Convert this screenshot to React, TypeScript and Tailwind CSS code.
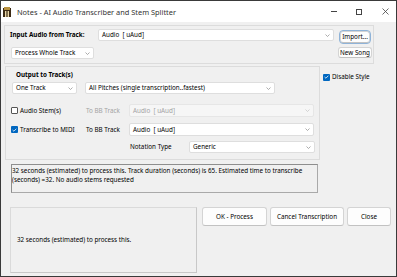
import React from 'react'

const Chevron = ({ muted }: { muted?: boolean }) => (
  <svg width="5" height="3" viewBox="0 0 5 3" className="shrink-0">
    <path d="M0.5 0.5 L2.5 2.5 L4.5 0.5" fill="none" stroke={muted ? '#c4c4c4' : '#8a8a8a'} strokeWidth="0.7" />
  </svg>
)

function Select({ text, className, disabled }: { text: string; className: string; disabled?: boolean }) {
  return (
    <div
      className={`flex items-center justify-between pl-[3px] pr-[3px] rounded-[2px] border ${
        disabled ? 'bg-[#f6f6f6] border-[#e6e6e6] text-[#a3a3a3]' : 'bg-white border-[#dedede] text-black'
      } ${className}`}>
      <span className="whitespace-pre">{text}</span>
      <Chevron muted={disabled} />
    </div>
  )
}

function Check({ checked, label }: { checked?: boolean; label: string }) {
  return (
    <div className="flex items-center gap-[2px]">
      {checked ? (
        <div className="w-[7px] h-[7px] rounded-[1px] bg-[#0067c0] flex items-center justify-center">
          <svg width="5" height="4" viewBox="0 0 5 4">
            <path d="M0.6 2 L1.9 3.2 L4.4 0.7" fill="none" stroke="white" strokeWidth="0.8" />
          </svg>
        </div>
      ) : (
        <div className="w-[7px] h-[7px] rounded-[1px] border border-[#555] bg-white" />
      )}
      <span className="whitespace-nowrap">{label}</span>
    </div>
  )
}

function Btn({ label, className }: { label: string; className: string }) {
  return (
    <div
      className={`flex items-center justify-center bg-[#fdfdfd] border border-[#d4d4d4] border-b-[#c2c2c2] rounded-[3px] whitespace-nowrap ${className}`}>
      {label}
    </div>
  )
}

export default function App() {
  return (
    <div className="w-[397px] h-[277px] border border-[#3a3a3a] bg-[#f0f0f0] flex flex-col overflow-hidden text-[6.3px] leading-[8px] text-black font-['Noto_Sans',sans-serif]">
      {/* title bar */}
      <div className="h-[21px] bg-white flex items-center shrink-0">
        <svg width="8" height="10" viewBox="0 0 8 10" className="ml-[2px]">
          <rect x="0" y="1" width="8" height="9" fill="#3b2a14" />
          <rect x="1" y="0" width="6" height="3" fill="#b8923f" />
          <rect x="2" y="4" width="1.4" height="6" fill="#e8d7a8" />
          <rect x="4.6" y="4" width="1.4" height="6" fill="#e8d7a8" />
        </svg>
        <span className="ml-[6px] text-[7.4px] text-[#333]">Notes - AI Audio Transcriber and Stem Splitter</span>
        <div className="ml-auto flex items-center">
          <div className="w-[6px] h-[1px] bg-[#444] mr-[19px]" />
          <div className="w-[6px] h-[6px] border border-[#444] mr-[20px]" />
          <svg width="7" height="7" viewBox="0 0 7 7" className="mr-[7px]">
            <path d="M0.5 0.5 L6.5 6.5 M6.5 0.5 L0.5 6.5" stroke="#444" strokeWidth="0.8" />
          </svg>
        </div>
      </div>

      {/* body */}
      <div className="flex-1 flex flex-col pl-[3px]">
        {/* input group */}
        <div className="mt-[3px] w-[370px] h-[39px] border border-[#dcdcdc] flex justify-between">
          <div className="flex flex-col pl-[5px] pt-[3px]">
            <div className="flex items-center h-[12px]">
              <span className="w-[88px] font-bold">Input Audio from Track:</span>
              <Select text="Audio  [ uAud]" className="w-[236px] h-[12px]" />
            </div>
            <Select text="Process Whole Track" className="mt-[6px] ml-[1px] w-[83px] h-[12px]" />
          </div>
          <div className="flex flex-col items-center pt-[5px] pr-[1px]">
            <Btn label="Import..." className="w-[30px] h-[12px] border-[#2d5f93] outline outline-[0.5px] outline-[#8fb3d8]" />
            <Btn label="New Song" className="mt-[4px] w-[34px] h-[11px]" />
          </div>
        </div>

        {/* output group + disable style */}
        <div className="flex mt-[2px]">
          <div className="ml-[1px] w-[315px] h-[94px] border border-[#dcdcdc] flex flex-col pl-[6px]">
            <span className="mt-[4px] pl-[4px] font-bold">Output to Track(s)</span>
            <div className="flex mt-[3px]">
              <Select text="One Track" className="w-[65px] h-[12px]" />
              <Select text="All Pitches (single transcription..fastest)" className="ml-[8px] w-[190px] h-[12px]" />
            </div>
            <div className="flex items-center h-[13px] mt-[10px]">
              <div className="w-[74px] -ml-[1px]">
                <Check label="Audio Stem(s)" />
              </div>
              <span className="w-[43px] ml-[1px] text-[#a3a3a3]">To BB Track</span>
              <Select text="Audio  [ uAud]" className="w-[185px] h-[13px]" disabled />
            </div>
            <div className="flex items-center h-[13px] mt-[6px]">
              <div className="w-[74px] -ml-[1px]">
                <Check checked label="Transcribe to MIDI" />
              </div>
              <span className="w-[43px] ml-[1px]">To BB Track</span>
              <Select text="Audio  [ uAud]" className="w-[185px] h-[13px]" />
            </div>
            <div className="flex items-center h-[12px] mt-[5px]">
              <span className="ml-[118px] w-[59px]">Notation Type</span>
              <Select text="Generic" className="w-[126px] h-[12px]" />
            </div>
          </div>
          <div className="ml-[3px] pt-[7px]">
            <Check checked label="Disable Style" />
          </div>
        </div>

        {/* status */}
        <div className="ml-[7px] mt-[4px] w-[307px] h-[29px] border border-[#a9a9a9] border-t-[#8e8e8e] border-l-[#8e8e8e] bg-[#f0f0f0] pt-[1px] leading-[9px]">
          32 seconds (estimated) to process this. Track duration (seconds) is 65. Estimated time to transcribe
          <br />
          (seconds) =32. No audio stems requested
        </div>

        {/* bottom row */}
        <div className="flex mt-[14px]">
          <div className="ml-[6px] w-[187px] h-[66px] border border-[#dadada] border-b-[#c8c8c8] border-r-[#c8c8c8] flex items-center pl-[6px]">
            32 seconds (estimated) to process this.
          </div>
          <Btn label="OK - Process" className="ml-[5px] w-[65px] h-[19px]" />
          <Btn label="Cancel Transcription" className="ml-[3px] w-[74px] h-[19px]" />
          <Btn label="Close" className="ml-[3px] w-[44px] h-[19px]" />
        </div>
      </div>
    </div>
  )
}
